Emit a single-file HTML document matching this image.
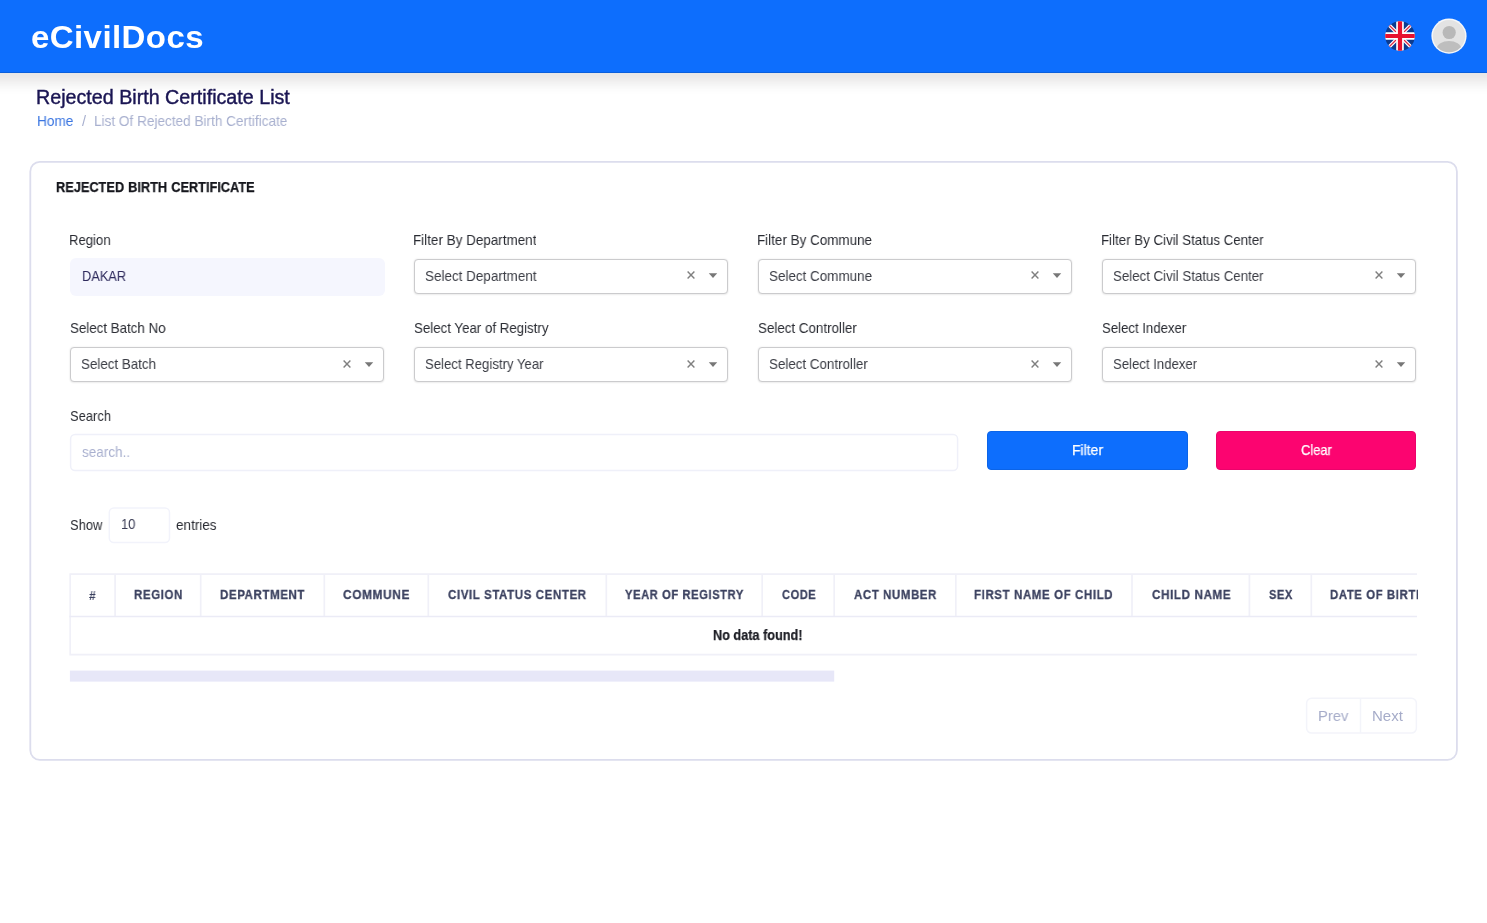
<!DOCTYPE html>
<html lang="en">
<head>
<meta charset="utf-8">
<title>eCivilDocs - Rejected Birth Certificate List</title>
<style>
*{box-sizing:border-box;margin:0;padding:0}
html,body{width:1487px;height:923px;overflow:hidden;background:#fff}
body{font-family:"Liberation Sans",Arial,sans-serif;color:#212529;position:relative}
.tx{position:absolute;white-space:pre;transform-origin:0 0;will-change:transform}
.ic{position:absolute}
#hdr{position:absolute;left:-60px;top:0;width:1607px;height:73px;background:#0d6efd;box-shadow:0 10px 12px rgba(20,10,5,.1);border-bottom:1px solid #0b5fdc}
#hin{position:absolute;left:60px;top:0;width:1487px;height:73px}
.sel{position:absolute;border:1px solid #cbcbcd;border-radius:4px;background:#fff;box-shadow:0 0 2px rgba(0,0,0,.10),0 1px 2px rgba(0,0,0,.05)}
#dakar{position:absolute;left:69.5px;top:258px;width:315.5px;height:37.5px;background:#f5f6fe;border-radius:6px}
.btn{position:absolute;top:431px;height:38.5px;border-radius:4px}
#bf{left:987px;width:200.8px;background:#0d6efd;border:1px solid #0b64e8}
#bcl{left:1216px;width:200.2px;background:#fc0470;border:1px solid #ea046b}
#tw{position:absolute;left:0;top:0;width:1417.5px;height:700px;overflow:hidden}

</style>
</head>
<body>
<svg class="ic" style="left:0;top:0" width="1487" height="923" viewBox="0 0 1487 923"><rect x="30.3" y="161.9" width="1426.6" height="597.9" rx="9.5" ry="9.5" fill="#fff" stroke="#dcdded" stroke-width="1.8"/></svg>
<header id="hdr"><div id="hin">
<div id="logo" class="tx" style="left:30.67px;top:16.41px;font-size:32px;line-height:42px;font-weight:700;color:#fff;letter-spacing:0.4px;word-spacing:0px;transform:scaleX(1.0319);">eCivilDocs</div>
<svg class="ic" style="left:1384.2px;top:20.4px" width="32" height="32" viewBox="0 0 32 32">
<defs><clipPath id="fc"><circle cx="16" cy="16" r="14.8"/></clipPath></defs>
<g clip-path="url(#fc)">
<rect width="32" height="32" fill="#0b3b8f"/>
<path d="M1 1L31 31M31 1L1 31" stroke="#fff" stroke-width="3.7"/>
<path d="M1 1L31 31M31 1L1 31" stroke="#dc2a45" stroke-width="1.25"/>
<path d="M16 0V32M0 16H32" stroke="#fff" stroke-width="7.6"/>
<path d="M16 0V32M0 16H32" stroke="#e8102e" stroke-width="4.2"/>
</g>
</svg>
<svg class="ic" style="left:1431px;top:18px" width="36" height="36" viewBox="0 0 36 36">
<defs><clipPath id="ac"><circle cx="18" cy="18.1" r="16.2"/></clipPath></defs>
<circle cx="18" cy="18.1" r="17.6" fill="#f5f7fa"/>
<circle cx="18" cy="18.1" r="16.15" fill="#e3e3e3"/>
<g clip-path="url(#ac)"><circle cx="18.2" cy="14.5" r="6.6" fill="#b8b8b8"/><ellipse cx="18" cy="30.6" rx="12.2" ry="7.7" fill="#bebebe"/></g>
</svg>
</div></header>
<div id="dakar"></div>
<div class="sel" style="left:414px;top:258.5px;width:314px;height:35px"></div>
<svg class="ic" style="left:686px;top:270.0px" width="10" height="10" viewBox="0 0 10 10"><path d="M1.6 1.6L8.4 8.4M8.4 1.6L1.6 8.4" stroke="#808080" stroke-width="1.45" fill="none"/></svg>
<svg class="ic" style="left:707.5px;top:273.3px" width="10" height="6" viewBox="0 0 10 6"><path d="M0.8 0.3H9.2L5 5Z" fill="#777"/></svg>
<div class="sel" style="left:758px;top:258.5px;width:314px;height:35px"></div>
<svg class="ic" style="left:1030px;top:270.0px" width="10" height="10" viewBox="0 0 10 10"><path d="M1.6 1.6L8.4 8.4M8.4 1.6L1.6 8.4" stroke="#808080" stroke-width="1.45" fill="none"/></svg>
<svg class="ic" style="left:1051.5px;top:273.3px" width="10" height="6" viewBox="0 0 10 6"><path d="M0.8 0.3H9.2L5 5Z" fill="#777"/></svg>
<div class="sel" style="left:1102px;top:258.5px;width:314px;height:35px"></div>
<svg class="ic" style="left:1374px;top:270.0px" width="10" height="10" viewBox="0 0 10 10"><path d="M1.6 1.6L8.4 8.4M8.4 1.6L1.6 8.4" stroke="#808080" stroke-width="1.45" fill="none"/></svg>
<svg class="ic" style="left:1395.5px;top:273.3px" width="10" height="6" viewBox="0 0 10 6"><path d="M0.8 0.3H9.2L5 5Z" fill="#777"/></svg>
<div class="sel" style="left:70px;top:347px;width:314px;height:35px"></div>
<svg class="ic" style="left:342px;top:358.5px" width="10" height="10" viewBox="0 0 10 10"><path d="M1.6 1.6L8.4 8.4M8.4 1.6L1.6 8.4" stroke="#808080" stroke-width="1.45" fill="none"/></svg>
<svg class="ic" style="left:363.5px;top:361.8px" width="10" height="6" viewBox="0 0 10 6"><path d="M0.8 0.3H9.2L5 5Z" fill="#777"/></svg>
<div class="sel" style="left:414px;top:347px;width:314px;height:35px"></div>
<svg class="ic" style="left:686px;top:358.5px" width="10" height="10" viewBox="0 0 10 10"><path d="M1.6 1.6L8.4 8.4M8.4 1.6L1.6 8.4" stroke="#808080" stroke-width="1.45" fill="none"/></svg>
<svg class="ic" style="left:707.5px;top:361.8px" width="10" height="6" viewBox="0 0 10 6"><path d="M0.8 0.3H9.2L5 5Z" fill="#777"/></svg>
<div class="sel" style="left:758px;top:347px;width:314px;height:35px"></div>
<svg class="ic" style="left:1030px;top:358.5px" width="10" height="10" viewBox="0 0 10 10"><path d="M1.6 1.6L8.4 8.4M8.4 1.6L1.6 8.4" stroke="#808080" stroke-width="1.45" fill="none"/></svg>
<svg class="ic" style="left:1051.5px;top:361.8px" width="10" height="6" viewBox="0 0 10 6"><path d="M0.8 0.3H9.2L5 5Z" fill="#777"/></svg>
<div class="sel" style="left:1102px;top:347px;width:314px;height:35px"></div>
<svg class="ic" style="left:1374px;top:358.5px" width="10" height="10" viewBox="0 0 10 10"><path d="M1.6 1.6L8.4 8.4M8.4 1.6L1.6 8.4" stroke="#808080" stroke-width="1.45" fill="none"/></svg>
<svg class="ic" style="left:1395.5px;top:361.8px" width="10" height="6" viewBox="0 0 10 6"><path d="M0.8 0.3H9.2L5 5Z" fill="#777"/></svg>

<div id="bf" class="btn"></div>
<div id="bcl" class="btn"></div>

<div id="tw">
<svg class="ic" style="left:0;top:0" width="1417" height="700" viewBox="0 0 1417 700" fill="none" stroke="#f0f0f8" stroke-width="1.7"><path d="M69.4 574.2H1430M69.4 654.6H1430M70.2 574.2V655.4M115.1 574.2V616.5M200.7 574.2V616.5M324.3 574.2V616.5M428.3 574.2V616.5M606.3 574.2V616.5M762.2 574.2V616.5M834.2 574.2V616.5M955.8 574.2V616.5M1132 574.2V616.5M1249.4 574.2V616.5M1311.3 574.2V616.5"/><path d="M69.4 616.5H1430" stroke="#ebebf6"/></svg>
<div id="h0" class="tx" style="left:88.70px;top:586.50px;font-size:13px;line-height:17px;font-weight:700;color:#3c4260;letter-spacing:0px;word-spacing:0px;transform:scaleX(0.9125);">#</div><div id="h1" class="tx" style="left:134.20px;top:585.82px;font-size:13.5px;line-height:18px;font-weight:700;color:#3c4260;letter-spacing:0.7px;word-spacing:0px;transform:scaleX(0.8517);-webkit-text-stroke:.3px #3c4260;">REGION</div><div id="h2" class="tx" style="left:219.50px;top:585.82px;font-size:13.5px;line-height:18px;font-weight:700;color:#3c4260;letter-spacing:0.7px;word-spacing:0px;transform:scaleX(0.8527);-webkit-text-stroke:.3px #3c4260;">DEPARTMENT</div><div id="h3" class="tx" style="left:343.30px;top:585.82px;font-size:13.5px;line-height:18px;font-weight:700;color:#3c4260;letter-spacing:0.7px;word-spacing:0px;transform:scaleX(0.8802);-webkit-text-stroke:.3px #3c4260;">COMMUNE</div><div id="h4" class="tx" style="left:447.60px;top:585.82px;font-size:13.5px;line-height:18px;font-weight:700;color:#3c4260;letter-spacing:0.7px;word-spacing:0px;transform:scaleX(0.8531);-webkit-text-stroke:.3px #3c4260;">CIVIL STATUS CENTER</div><div id="h5" class="tx" style="left:624.90px;top:585.82px;font-size:13.5px;line-height:18px;font-weight:700;color:#3c4260;letter-spacing:0.7px;word-spacing:0px;transform:scaleX(0.8287);-webkit-text-stroke:.3px #3c4260;">YEAR OF REGISTRY</div><div id="h6" class="tx" style="left:781.70px;top:585.82px;font-size:13.5px;line-height:18px;font-weight:700;color:#3c4260;letter-spacing:0.7px;word-spacing:0px;transform:scaleX(0.8200);-webkit-text-stroke:.3px #3c4260;">CODE</div><div id="h7" class="tx" style="left:853.60px;top:585.82px;font-size:13.5px;line-height:18px;font-weight:700;color:#3c4260;letter-spacing:0.7px;word-spacing:0px;transform:scaleX(0.8480);-webkit-text-stroke:.3px #3c4260;">ACT NUMBER</div><div id="h8" class="tx" style="left:974.30px;top:585.82px;font-size:13.5px;line-height:18px;font-weight:700;color:#3c4260;letter-spacing:0.7px;word-spacing:0px;transform:scaleX(0.8524);-webkit-text-stroke:.3px #3c4260;">FIRST NAME OF CHILD</div><div id="h9" class="tx" style="left:1151.50px;top:585.82px;font-size:13.5px;line-height:18px;font-weight:700;color:#3c4260;letter-spacing:0.7px;word-spacing:0px;transform:scaleX(0.8634);-webkit-text-stroke:.3px #3c4260;">CHILD NAME</div><div id="h10" class="tx" style="left:1268.60px;top:585.82px;font-size:13.5px;line-height:18px;font-weight:700;color:#3c4260;letter-spacing:0.7px;word-spacing:0px;transform:scaleX(0.8166);-webkit-text-stroke:.3px #3c4260;">SEX</div><div id="h11" class="tx" style="left:1330.00px;top:585.82px;font-size:13.5px;line-height:18px;font-weight:700;color:#3c4260;letter-spacing:0.7px;word-spacing:0px;transform:scaleX(0.8430);-webkit-text-stroke:.3px #3c4260;">DATE OF BIRTH</div><div id="nd" class="tx" style="left:712.60px;top:625.98px;font-size:14.5px;line-height:19px;font-weight:700;color:#1c1d24;letter-spacing:0px;word-spacing:0px;transform:scaleX(0.8752);-webkit-text-stroke:.25px #1c1d24;">No data found!</div>
</div>
<svg class="ic" style="left:0;top:660px" width="900" height="30" viewBox="0 660 900 30"><rect x="69.9" y="670.6" width="764.3" height="11" fill="#e7e7f8"/></svg>
<svg class="ic" style="left:0;top:0" width="1487" height="800" viewBox="0 0 1487 800" fill="#fff" stroke-width="1.5">
<rect x="70.6" y="434.4" width="887" height="36.2" rx="4.5" stroke="#eff0f9"/>
<rect x="109.3" y="508" width="60.2" height="34.5" rx="4.5" stroke="#f2f3fb"/>
<rect x="1306.6" y="698.3" width="109.8" height="34.8" rx="5" stroke="#f3f4fa"/>
<path d="M1360.5 698.3V733.1" stroke="#f3f4fa" fill="none"/>
</svg>
<h1 id="ttl" class="tx" style="left:35.99px;top:85.24px;font-size:19.5px;line-height:25px;font-weight:400;color:#1a1553;letter-spacing:0px;word-spacing:0px;transform:scaleX(1.0095);-webkit-text-stroke:.4px #1a1553;">Rejected Birth Certificate List</h1>
<div id="bc1" class="tx" style="left:36.56px;top:111.98px;font-size:14.5px;line-height:19px;font-weight:400;color:#3b76e1;letter-spacing:0px;word-spacing:0px;transform:scaleX(0.9411);">Home</div>
<div id="bc2" class="tx" style="left:81.50px;top:111.98px;font-size:14.5px;line-height:19px;font-weight:400;color:#a8b0cf;letter-spacing:0px;word-spacing:0px;transform:scaleX(1.0000);">/</div>
<div id="bc3" class="tx" style="left:94.36px;top:111.98px;font-size:14.5px;line-height:19px;font-weight:400;color:#a8b0cf;letter-spacing:0px;word-spacing:0px;transform:scaleX(0.9370);">List Of Rejected Birth Certificate</div>
<h2 id="ctitle" class="tx" style="left:55.60px;top:177.98px;font-size:14.5px;line-height:19px;font-weight:700;color:#15161c;letter-spacing:0px;word-spacing:0.6px;transform:scaleX(0.8800);-webkit-text-stroke:.25px #15161c;">REJECTED BIRTH CERTIFICATE</h2>
<label id="l1" class="tx" style="left:69.00px;top:230.98px;font-size:14.5px;line-height:19px;font-weight:400;color:#2a2c33;letter-spacing:0px;word-spacing:0px;transform:scaleX(0.9045);">Region</label>
<label id="l2" class="tx" style="left:413.27px;top:230.98px;font-size:14.5px;line-height:19px;font-weight:400;color:#2a2c33;letter-spacing:0px;word-spacing:0px;transform:scaleX(0.9285);">Filter By Department</label>
<label id="l3" class="tx" style="left:757.17px;top:230.98px;font-size:14.5px;line-height:19px;font-weight:400;color:#2a2c33;letter-spacing:0px;word-spacing:0px;transform:scaleX(0.9267);">Filter By Commune</label>
<label id="l4" class="tx" style="left:1101.28px;top:230.98px;font-size:14.5px;line-height:19px;font-weight:400;color:#2a2c33;letter-spacing:0px;word-spacing:0px;transform:scaleX(0.9170);">Filter By Civil Status Center</label>
<div id="dk" class="tx" style="left:81.52px;top:266.98px;font-size:14.5px;line-height:19px;font-weight:400;color:#2e2a5c;letter-spacing:0px;word-spacing:0px;transform:scaleX(0.8827);">DAKAR</div>
<div id="s2" class="tx" style="left:425.20px;top:266.98px;font-size:14.5px;line-height:19px;font-weight:400;color:#3a3c44;letter-spacing:0px;word-spacing:0px;transform:scaleX(0.9287);">Select Department</div>
<div id="s3" class="tx" style="left:769.10px;top:266.98px;font-size:14.5px;line-height:19px;font-weight:400;color:#3a3c44;letter-spacing:0px;word-spacing:0px;transform:scaleX(0.9267);">Select Commune</div>
<div id="s4" class="tx" style="left:1113.30px;top:266.98px;font-size:14.5px;line-height:19px;font-weight:400;color:#3a3c44;letter-spacing:0px;word-spacing:0px;transform:scaleX(0.9157);">Select Civil Status Center</div>
<label id="l5" class="tx" style="left:69.80px;top:318.98px;font-size:14.5px;line-height:19px;font-weight:400;color:#2a2c33;letter-spacing:0px;word-spacing:0px;transform:scaleX(0.9191);">Select Batch No</label>
<label id="l6" class="tx" style="left:413.70px;top:318.98px;font-size:14.5px;line-height:19px;font-weight:400;color:#2a2c33;letter-spacing:0px;word-spacing:0px;transform:scaleX(0.9167);">Select Year of Registry</label>
<label id="l7" class="tx" style="left:758.10px;top:318.98px;font-size:14.5px;line-height:19px;font-weight:400;color:#2a2c33;letter-spacing:0px;word-spacing:0px;transform:scaleX(0.9222);">Select Controller</label>
<label id="l8" class="tx" style="left:1102.20px;top:318.98px;font-size:14.5px;line-height:19px;font-weight:400;color:#2a2c33;letter-spacing:0px;word-spacing:0px;transform:scaleX(0.9089);">Select Indexer</label>
<div id="s5" class="tx" style="left:80.90px;top:354.98px;font-size:14.5px;line-height:19px;font-weight:400;color:#3a3c44;letter-spacing:0px;word-spacing:0px;transform:scaleX(0.9220);">Select Batch</div>
<div id="s6" class="tx" style="left:425.20px;top:354.98px;font-size:14.5px;line-height:19px;font-weight:400;color:#3a3c44;letter-spacing:0px;word-spacing:0px;transform:scaleX(0.9076);">Select Registry Year</div>
<div id="s7" class="tx" style="left:769.10px;top:354.98px;font-size:14.5px;line-height:19px;font-weight:400;color:#3a3c44;letter-spacing:0px;word-spacing:0px;transform:scaleX(0.9222);">Select Controller</div>
<div id="s8" class="tx" style="left:1113.30px;top:354.98px;font-size:14.5px;line-height:19px;font-weight:400;color:#3a3c44;letter-spacing:0px;word-spacing:0px;transform:scaleX(0.9078);">Select Indexer</div>
<label id="l9" class="tx" style="left:69.60px;top:406.98px;font-size:14.5px;line-height:19px;font-weight:400;color:#2a2c33;letter-spacing:0px;word-spacing:0px;transform:scaleX(0.8915);">Search</label>
<div id="ph" class="tx" style="left:82.00px;top:442.98px;font-size:14.5px;line-height:19px;font-weight:400;color:#a9b0cf;letter-spacing:0px;word-spacing:0px;transform:scaleX(0.9318);">search..</div>
<div id="bft" class="tx" style="left:1071.64px;top:440.98px;font-size:14.5px;line-height:19px;font-weight:400;color:#fff;letter-spacing:0px;word-spacing:0px;transform:scaleX(0.9620);-webkit-text-stroke:.25px #fff;">Filter</div>
<div id="bct" class="tx" style="left:1301.00px;top:440.98px;font-size:14.5px;line-height:19px;font-weight:400;color:#fff;letter-spacing:0px;word-spacing:0px;transform:scaleX(0.8903);-webkit-text-stroke:.25px #fff;">Clear</div>
<div id="sh" class="tx" style="left:69.70px;top:515.98px;font-size:14.5px;line-height:19px;font-weight:400;color:#2a2c33;letter-spacing:0px;word-spacing:0px;transform:scaleX(0.8940);">Show</div>
<div id="n10" class="tx" style="left:120.60px;top:514.98px;font-size:14.5px;line-height:19px;font-weight:400;color:#3a3c55;letter-spacing:0px;word-spacing:0px;transform:scaleX(0.8962);">10</div>
<div id="en" class="tx" style="left:176.00px;top:515.98px;font-size:14.5px;line-height:19px;font-weight:400;color:#2a2c33;letter-spacing:0px;word-spacing:0px;transform:scaleX(0.9313);">entries</div>
<div id="pv" class="tx" style="left:1317.61px;top:706.30px;font-size:15px;line-height:20px;font-weight:400;color:#a6acc9;letter-spacing:0px;word-spacing:0px;transform:scaleX(0.9854);">Prev</div>
<div id="nx" class="tx" style="left:1372.30px;top:706.30px;font-size:15px;line-height:20px;font-weight:400;color:#a6acc9;letter-spacing:0px;word-spacing:0px;transform:scaleX(1.0008);">Next</div>

</body>
</html>
